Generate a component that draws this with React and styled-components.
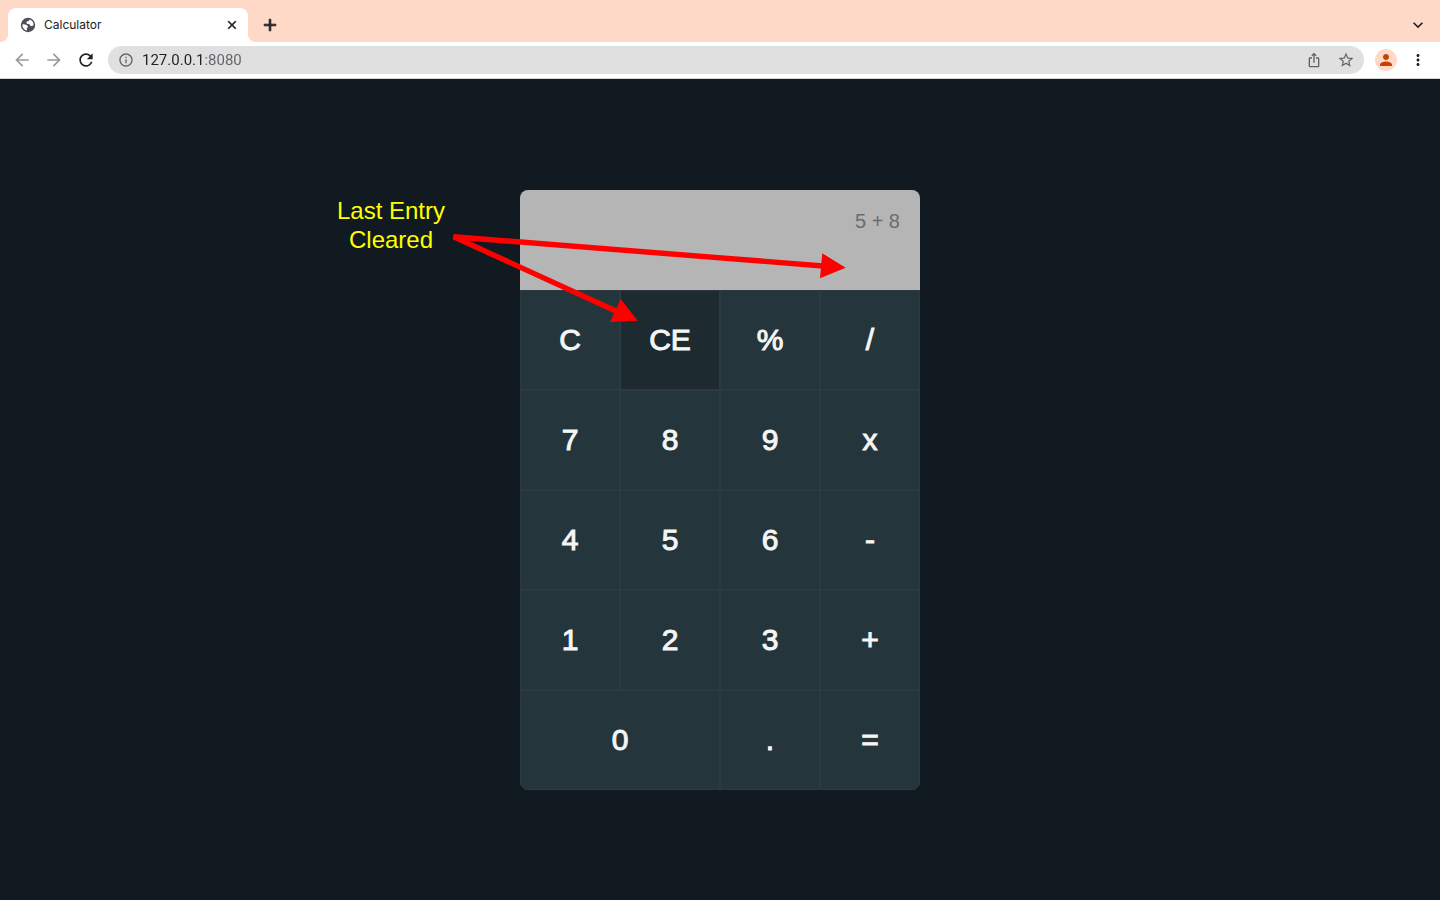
import React from "react";
import styled, { createGlobalStyle } from "styled-components";
import {
  MdArrowBack,
  MdArrowForward,
  MdRefresh,
  MdInfoOutline,
  MdIosShare,
  MdStarBorder,
  MdPerson,
  MdMoreVert,
  MdClose,
  MdAdd,
  MdKeyboardArrowDown,
} from "react-icons/md";

const GlobalStyle = createGlobalStyle`
  * { box-sizing: border-box; }
  body { margin: 0; background: #111a20; }
  button, input { font: inherit; }
  svg path[fill="none"] { stroke: none; }
`;

const Browser = styled.div`
  display: flex;
  flex-direction: column;
  min-height: 100vh;
  font-family: Inter, "Liberation Sans", sans-serif;
  color: #202124;
`;

const TabStrip = styled.header`
  display: flex;
  align-items: flex-end;
  height: 42px;
  padding: 0 8px;
  background: #ffd9c7;
`;

const Tab = styled.div`
  position: relative;
  display: flex;
  align-items: center;
  gap: 8px;
  width: 240px;
  height: 34px;
  padding: 0 8px 0 12px;
  background: #fff;
  border-radius: 8px 8px 0 0;

  &::before,
  &::after {
    content: "";
    position: absolute;
    bottom: 0;
    width: 8px;
    height: 8px;
  }
  &::before {
    right: 100%;
    background: radial-gradient(circle at 0 0, #ffd9c7 8px, #fff 8px);
  }
  &::after {
    left: 100%;
    background: radial-gradient(circle at 100% 0, #ffd9c7 8px, #fff 8px);
  }
`;

const TabTitle = styled.span`
  flex: 1;
  font-size: 12px;
  line-height: 16px;
`;

const IconButton = styled.button`
  display: flex;
  align-items: center;
  justify-content: center;
  width: ${(p) => p.$size}px;
  height: ${(p) => p.$size}px;
  padding: 0;
  border: 0;
  border-radius: 50%;
  background: ${(p) => p.$fill || "transparent"};
  color: ${(p) => p.$color || "#202124"};

  svg {
    stroke: ${(p) => (p.$bold ? "currentColor" : "none")};
    stroke-width: 1px;
  }
`;

const NewTab = styled(IconButton)`
  margin: 0 auto 3px 8px;
`;

const TabSearch = styled(IconButton)`
  margin-bottom: 3px;
`;

const Toolbar = styled.div`
  display: flex;
  align-items: center;
  height: 37px;
  padding: 0 8px;
  background: #fff;
  border-bottom: 1px solid #d4d4d4;
`;

const NavGroup = styled.nav`
  display: flex;
  gap: 4px;
  margin-right: 8px;
`;

const AddressBar = styled.label`
  display: flex;
  flex: 1;
  align-items: center;
  height: 28px;
  padding: 0 4px 0 10px;
  border-radius: 14px;
  background: #e0e0e0;
  color: #5f6368;
`;

const AddressInput = styled.input`
  flex: 1;
  min-width: 0;
  margin-left: 8px;
  padding: 0;
  border: 0;
  outline: 0;
  font-family: Roboto, "Liberation Sans", sans-serif;
  font-size: 15px;
  line-height: 20px;
  color: transparent;
  background: linear-gradient(to right, #202124 62px, #5f6368 62px);
  background-clip: text;
`;

const AddressActions = styled.div`
  display: flex;
  gap: 4px;
`;

const ProfileGroup = styled.div`
  display: flex;
  align-items: center;
  gap: 7px;
  margin-left: 11px;
`;

const Page = styled.main`
  display: flex;
  flex: 1;
  align-items: center;
  justify-content: center;
  background: #111a20;
  padding: 24px 0;
  font-family: "Liberation Sans", Arial, sans-serif;
`;

const Calculator = styled.section`
  position: relative;
  width: 400px;
`;

const Display = styled.div`
  display: flex;
  flex-direction: column;
  align-items: flex-end;
  height: 100px;
  padding: 20px;
  border-radius: 8px 8px 0 0;
  background: #b5b5b5;
`;

const Expression = styled.output`
  font-size: 20px;
  line-height: 22px;
  color: #6c6c6c;
`;

const Keypad = styled.div`
  display: grid;
  grid-template-columns: repeat(4, 1fr);
  grid-auto-rows: 100px;
  overflow: hidden;
  border-radius: 0 0 8px 8px;
`;

const Key = styled.button`
  grid-column: span ${(p) => (p.$wide ? 2 : 1)};
  padding: 0;
  border: 1px solid #2d3a41;
  background: ${(p) => (p.$pressed ? "#1d2a2f" : "#24363c")};
  color: #f5f5f5;
  font-size: 30px;
  line-height: 36px;
  -webkit-text-stroke: 1px #f5f5f5;
`;

const Note = styled.p`
  position: absolute;
  top: 6px;
  right: 100%;
  width: 120px;
  margin: 0 69px 0 0;
  color: #ff0;
  font-size: 24px;
  line-height: 29px;
  text-align: center;
`;

const Arrows = styled.svg`
  position: absolute;
  top: 40px;
  left: -70px;
  pointer-events: none;
`;

const KEYS = [
  "C", "CE", "%", "/",
  "7", "8", "9", "x",
  "4", "5", "6", "-",
  "1", "2", "3", "+",
  "0", ".", "=",
];

function Globe() {
  return (
    <svg width="16" height="16" viewBox="0 0 16 16" aria-hidden="true">
      <circle cx="8" cy="8" r="7.2" fill="#4d5156" />
      <path
        d="M9.6 2.5C9.4 3.8 8.6 4.2 7.4 4.3 6.4 4.5 6.4 5.4 6.6 6.2 7.2 7 8.6 6.6 9.4 7.2 10 7.8 10 8.6 11 8.9 11.8 9.1 12.8 8.8 13.5 8.6A5.7 5.7 0 0 0 9.6 2.5Z"
        fill="#fff"
      />
      <path
        d="M2.4 7.4C4 7.2 5.8 7.5 6.9 8.2 8 8.9 8.2 9.8 7.6 10.5 6.8 11 6.6 11.3 6.8 12.1 7 12.7 7 13.1 7.2 13.6A5.7 5.7 0 0 1 2.4 7.4Z"
        fill="#fff"
      />
    </svg>
  );
}

export default function App() {
  return (
    <>
      <GlobalStyle />
      <Browser>
        <TabStrip>
          <Tab>
            <Globe />
            <TabTitle>Calculator</TabTitle>
            <IconButton $size={16} $bold aria-label="Close tab">
              <MdClose size={14} />
            </IconButton>
          </Tab>
          <NewTab $size={28} $bold aria-label="New tab">
            <MdAdd size={20} />
          </NewTab>
          <TabSearch $size={28} aria-label="Search tabs">
            <MdKeyboardArrowDown size={20} />
          </TabSearch>
        </TabStrip>

        <Toolbar>
          <NavGroup aria-label="History">
            <IconButton $size={28} $color="#9b9b9b" aria-label="Back">
              <MdArrowBack size={20} />
            </IconButton>
            <IconButton $size={28} $color="#9b9b9b" aria-label="Forward">
              <MdArrowForward size={20} />
            </IconButton>
            <IconButton $size={28} aria-label="Reload">
              <MdRefresh size={20} />
            </IconButton>
          </NavGroup>
          <AddressBar>
            <MdInfoOutline size={16} />
            <AddressInput type="text" aria-label="Address" defaultValue="127.0.0.1:8080" />
            <AddressActions>
              <IconButton $size={28} $color="#5f6368" aria-label="Share">
                <MdIosShare size={16} />
              </IconButton>
              <IconButton $size={28} $color="#5f6368" aria-label="Bookmark">
                <MdStarBorder size={18} />
              </IconButton>
            </AddressActions>
          </AddressBar>
          <ProfileGroup>
            <IconButton $size={22} $fill="#ffd9c7" $color="#c93f00" aria-label="Profile">
              <MdPerson size={18} />
            </IconButton>
            <IconButton $size={28} aria-label="Menu">
              <MdMoreVert size={18} />
            </IconButton>
          </ProfileGroup>
        </Toolbar>

        <Page>
          <Calculator aria-label="Calculator">
            <Display>
              <Expression>5 + 8</Expression>
            </Display>
            <Keypad>
              {KEYS.map((key) => (
                <Key key={key} type="button" $wide={key === "0"} $pressed={key === "CE"}>
                  {key}
                </Key>
              ))}
            </Keypad>
            <Note>
              Last Entry
              <br />
              Cleared
            </Note>
            <Arrows width="400" height="100" viewBox="0 0 400 100" aria-hidden="true">
              <g stroke="#f00" strokeWidth="5.4">
                <line x1="3.4" y1="6.7" x2="373" y2="36" />
                <line x1="3.6" y1="6.7" x2="168" y2="82" />
              </g>
              <g fill="#f00">
                <polygon points="372.3,23.3 395.7,37.7 370,48.3" />
                <polygon points="170.7,69 187.7,90.7 160,92" />
              </g>
            </Arrows>
          </Calculator>
        </Page>
      </Browser>
    </>
  );
}
